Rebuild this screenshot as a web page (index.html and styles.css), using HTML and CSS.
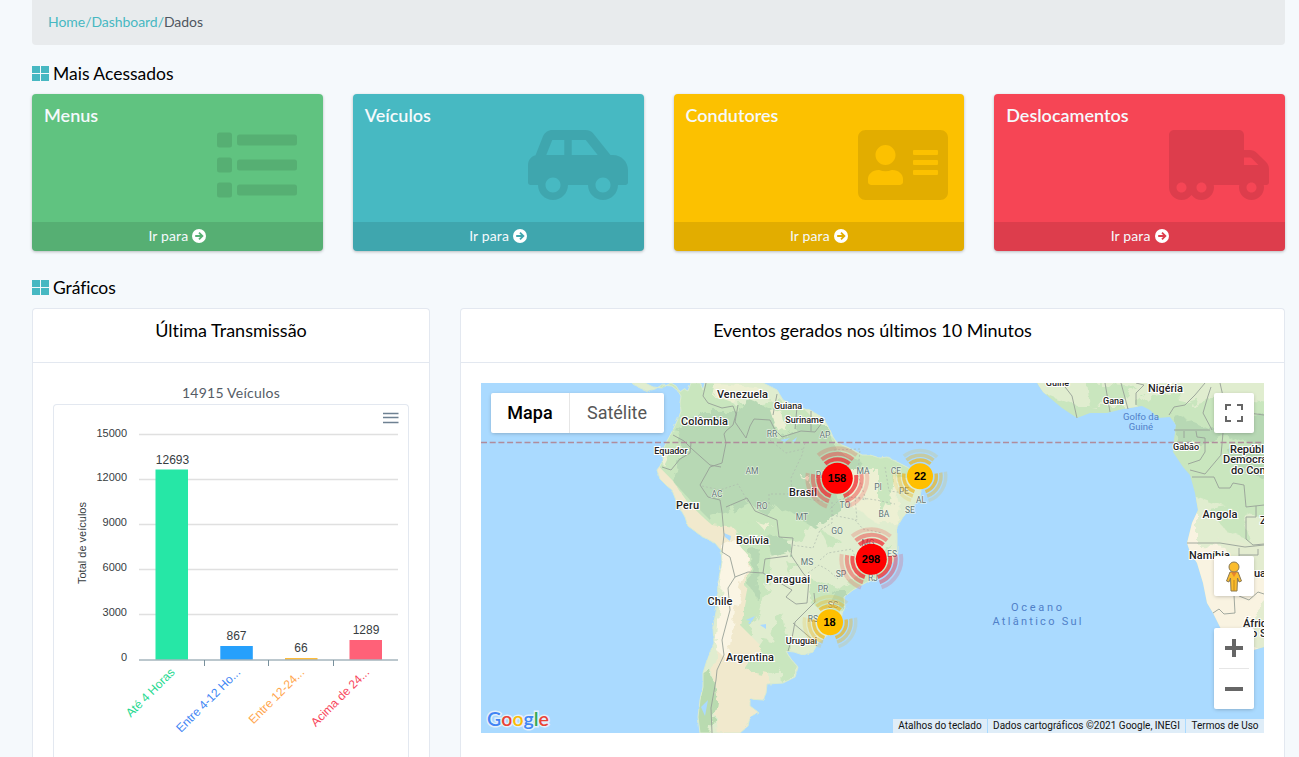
FILE: index.html
```html
<!DOCTYPE html>
<html lang="pt-BR">
<head>
<meta charset="utf-8">
<title>Dashboard</title>
<link rel="stylesheet" href="styles.css">
</head>
<body>
<svg class="defs" width="0" height="0">
  <defs>
    <symbol id="grid" viewBox="0 0 17 15"><path d="M0 0h8v7H0zM9 0h8v7H9zM0 8h8v7H0zM9 8h8v7H9z"/></symbol>
    <symbol id="go" viewBox="0 0 14 14"><circle cx="7" cy="7" r="7" fill="#fff"/><path class="go-arrow" d="M3.2 7h7M7 3.6 10.4 7 7 10.4"/></symbol>
  </defs>
</svg>
<main class="page">
  <nav class="breadcrumb"><a>Home</a><a>/</a><a>Dashboard</a><a>/</a><span>Dados</span></nav>

  <h2 class="section-title"><svg width="17" height="15"><use href="#grid"/></svg><span class="t-mais">Mais Acessados</span></h2>
  <section class="cards">
    <article class="card green">
      <div class="card-body"><h3 class="t-menus">Menus</h3>
        <svg class="card-icon list" width="80" height="80" viewBox="0 0 80 80"><rect x="0" y="7.5" width="15" height="15" rx="2.5"/><rect x="20" y="9.5" width="60" height="11" rx="2.5"/><rect x="0" y="32.5" width="15" height="15" rx="2.5"/><rect x="20" y="34.5" width="60" height="11" rx="2.5"/><rect x="0" y="57.5" width="15" height="15" rx="2.5"/><rect x="20" y="59.5" width="60" height="11" rx="2.5"/></svg></div>
      <a class="card-link"><span>Ir para</span><svg width="14" height="14"><use href="#go"/></svg></a>
    </article>
    <article class="card teal">
      <div class="card-body"><h3 class="t-veic">Veículos</h3>
        <svg class="card-icon" width="100" height="80" viewBox="0 0 640 512"><path d="M544 192h-16L419.22 56.02A64.025 64.025 0 0 0 369.24 32H155.33c-26.17 0-49.7 15.93-59.42 40.23L48 194.26C20.44 201.4 0 226.21 0 256v112c0 8.84 7.16 16 16 16h48c0 53.02 42.98 96 96 96s96-42.98 96-96h128c0 53.02 42.98 96 96 96s96-42.98 96-96h48c8.84 0 16-7.16 16-16v-80c0-53.02-42.98-96-96-96zM160 432c-26.47 0-48-21.53-48-48s21.53-48 48-48 48 21.53 48 48-21.53 48-48 48zm72-240H116.93l38.4-96H232v96zm48 0V96h89.24l76.8 96H280zm200 240c-26.47 0-48-21.53-48-48s21.53-48 48-48 48 21.53 48 48-21.53 48-48 48z"/></svg></div>
      <a class="card-link"><span>Ir para</span><svg width="14" height="14"><use href="#go"/></svg></a>
    </article>
    <article class="card yellow">
      <div class="card-body"><h3 class="t-cond">Condutores</h3>
        <svg class="card-icon" width="90" height="80" viewBox="0 0 576 512"><path d="M528 32H48C21.5 32 0 53.5 0 80v352c0 26.5 21.5 48 48 48h480c26.5 0 48-21.5 48-48V80c0-26.5-21.5-48-48-48zm-352 96c35.3 0 64 28.7 64 64s-28.7 64-64 64-64-28.7-64-64 28.7-64 64-64zm112 236.8c0 10.6-10 19.2-22.4 19.2H86.4C74 384 64 375.4 64 364.8v-19.2c0-31.8 30.1-57.6 67.2-57.6h5c12.3 5.1 25.7 8 39.8 8s27.6-2.9 39.8-8h5c37.1 0 67.2 25.8 67.2 57.6v19.2zM512 312c0 4.400-3.600 8-8 8H360c-4.400 0-8-3.600-8-8v-16c0-4.400 3.600-8 8-8h144c4.400 0 8 3.600 8 8v16zm0-64c0 4.400-3.600 8-8 8H360c-4.400 0-8-3.600-8-8v-16c0-4.400 3.600-8 8-8h144c4.400 0 8 3.600 8 8v16zm0-64c0 4.400-3.600 8-8 8H360c-4.400 0-8-3.600-8-8v-16c0-4.400 3.600-8 8-8h144c4.400 0 8 3.600 8 8v16z"/></svg></div>
      <a class="card-link"><span>Ir para</span><svg width="14" height="14"><use href="#go"/></svg></a>
    </article>
    <article class="card red">
      <div class="card-body"><h3 class="t-desl">Deslocamentos</h3>
        <svg class="card-icon" width="100" height="80" viewBox="0 0 640 512"><path d="M621.3 237.3l-58.500-58.500c-12-12-28.300-18.700-45.300-18.700H480V64c0-17.700-14.300-32-32-32H32C14.300 32 0 46.300 0 64v336c0 44.200 35.800 80 80 80 26.300 0 49.400-12.900 64-32.400 14.600 19.600 37.700 32.400 64 32.400 44.200 0 80-35.800 80-80 0-5.500-.6-10.800-1.600-16h163.200c-1.100 5.200-1.600 10.500-1.600 16 0 44.200 35.800 80 80 80s80-35.800 80-80c0-5.500-.6-10.800-1.600-16H624c8.800 0 16-7.200 16-16v-85.500c0-17-6.700-33.200-18.700-45.200zM80 432c-17.600 0-32-14.400-32-32s14.400-32 32-32 32 14.400 32 32-14.400 32-32 32zm128 0c-17.600 0-32-14.400-32-32s14.400-32 32-32 32 14.400 32 32-14.400 32-32 32zm272-224h37.500c4.300 0 8.300 1.700 11.300 4.700l43.300 43.300H480v-48zm48 224c-17.600 0-32-14.400-32-32s14.400-32 32-32 32 14.400 32 32-14.400 32-32 32z"/></svg></div>
      <a class="card-link"><span>Ir para</span><svg width="14" height="14"><use href="#go"/></svg></a>
    </article>
  </section>

  <h2 class="section-title second"><svg width="17" height="15"><use href="#grid"/></svg><span class="t-graf">Gráficos</span></h2>
  <section class="panels">
    <article class="panel">
      <header class="panel-head t-ult">Última Transmissão</header>
      <div class="panel-body">
        <p class="total">14915 Veículos</p>
        <div class="chart">
          <svg width="354" height="340" viewBox="54 405 354 340">
            <path d="M383 413.500h15.500M383 417.500h15.500M383 422.500h15.500" stroke="#6e8192" stroke-width="1.500"/>
            <path d="M139 434.500h259M139 479.500h259M139 524.500h259M139 569.500h259M139 614.500h259" stroke="#e0e0e0" stroke-width="1.300"/>
            <rect x="155.500" y="469.500" width="32.500" height="190" fill="#26e7a6"/>
            <rect x="220.300" y="646" width="32.500" height="13.500" fill="#26a0fc"/>
            <rect x="285" y="658" width="32.500" height="1.500" fill="#febc3b"/>
            <rect x="349.500" y="640" width="32.500" height="19.500" fill="#ff6178"/>
            <path d="M139 660h259M204.500 660v6M268.500 660v6M333.500 660v6" stroke="#78909c" fill="none"/>
            <g class="ylab"><text x="127" y="437">15000</text><text x="127" y="481">12000</text><text x="127" y="526">9000</text><text x="127" y="571">6000</text><text x="127" y="616">3000</text><text x="127" y="661">0</text></g>
            <g class="vals"><text x="172.500" y="464">12693</text><text x="236.500" y="640">867</text><text x="301" y="652">66</text><text x="366" y="634">1289</text></g>
            <text class="axis-title" transform="translate(86 543) rotate(-90)" textLength="82">Total de veículos</text>
            <g class="cats"><text transform="translate(175.500 673) rotate(-45)">Até 4 Horas</text><text transform="translate(241 673) rotate(-45)">Entre 4-12 Ho...</text><text transform="translate(305 673) rotate(-45)">Entre 12-24...</text><text transform="translate(370 673) rotate(-45)">Acima de 24...</text></g>
          </svg>
        </div>
      </div>
    </article>

    <article class="panel">
      <header class="panel-head t-evt">Eventos gerados nos últimos 10 Minutos</header>
      <div class="panel-body">
        <div class="map">
          <svg class="map-canvas" width="783" height="350" viewBox="481 383 783 350">
            <defs>
              <path id="sa" d="M632 383 638 387 647 391 655 389 662 385 672 386 678 391 681 396 680 403 681 411 679 417 673 430 667 441 663 450 663 460 660 466 657 470 660 479 666 485 672 490 677 503 685 517 688 526 703 537 715 543 721 550 722 562 718 583 717 607 713 627 714 643 708 657 703 673 703 687 700 700 698 717 700 733H740L748 726 750 717 758 712 750 706 750 699 763 700 766 693 767 684 783 683 795 677 798 667 790 658 786 651 794 652 803 655 813 652 818 643 828 635 840 620 845 607 844 597 853 590 867 582 878 578 888 570 893 562 897 550 897 527 903 517 913 507 920 497 922 483 915 472 907 467 893 460 887 457 880 458 870 455 862 455 857 452 847 447 837 443 833 437 830 430 823 418 810 410 797 407 783 400 777 390 763 383 705 383 703 390 700 383 691 383 688 391 684 389 680 392 676 386 671 383 662 388 653 387 645 383Z"/>
              <path id="af" d="M1037 383 1043 392 1050 398 1062 408 1077 418 1090 413 1107 413 1123 409 1142 406 1150 410 1158 418 1170 417 1176 425 1174 440 1173 452 1183 467 1190 475 1195 493 1198 510 1192 523 1187 543 1190 552 1197 563 1203 583 1207 603 1213 613 1220 627 1227 642 1237 648 1250 651 1264 647V383Z"/>
              <clipPath id="sac"><use href="#sa"/></clipPath>
              <clipPath id="afc"><use href="#af"/></clipPath>
              <filter id="rough" x="-5%" y="-5%" width="110%" height="110%"><feTurbulence type="fractalNoise" baseFrequency=".09" numOctaves="3" seed="4"/><feDisplacementMap in="SourceGraphic" scale="13"/></filter>
              <filter id="coast" x="-2%" y="-2%" width="104%" height="104%"><feTurbulence type="fractalNoise" baseFrequency=".18" numOctaves="2" seed="9"/><feDisplacementMap in="SourceGraphic" scale="3"/></filter>
              <g id="arcs" fill="none" stroke-dasharray="80 40" transform="rotate(-10)"><circle r="19" pathLength="360" opacity=".7"/><circle r="24.500" pathLength="360" opacity=".4"/><circle r="30" pathLength="360" opacity=".18"/></g>
            </defs>
            <rect x="481" y="383" width="783" height="350" fill="#aadaff"/>
            <use href="#sa" fill="#e0edcf"/>
            <g clip-path="url(#sac)"><g filter="url(#rough)">
              <path fill="#c9e6be" d="M660 375 710 380 735 405 775 400 800 405 835 440 905 460 915 480 865 470 840 510 810 520 800 540 770 545 765 590 745 650 735 600 738 560 700 525 660 480Z"/>
              <path fill="#b7d8b4" d="M678 430 705 412 738 412 748 398 770 407 778 440 800 425 828 425 838 452 860 460 862 470 835 483 842 510 815 528 790 512 776 507 770 518 748 502 728 512 708 518 690 500 672 480 682 452Z"/>
              <path fill="#f1e9cd" d="M655 462 672 480 690 505 712 525 735 528 738 545 748 555 748 585 740 625 770 655 770 740 716 740 713 670 725 620 722 550 680 525 650 485Z"/>
              <path fill="#faf5e4" d="M722 545 735 540 748 555 744 580 735 610 728 660 716 650 720 600Z"/>
              <path fill="#b9dbb0" d="M695 680 711 670 716 700 709 740H692Z"/>
              <path fill="#c9e6be" d="M749 555 772 545 768 580 758 620 750 605ZM770 630 782 612 790 650 799 672 782 686 780 660ZM808 578 840 588 858 575 870 560 892 545 888 575 845 600 842 615 812 605ZM740 525 770 518 784 545 755 552Z"/>
              <path fill="#b7d8b4" d="M765 535 788 540 791 552 772 557ZM750 550 760 548 757 600 751 588ZM835 590 845 590 845 610 828 604Z"/>
              <path fill="#edf0d3" d="M770 410 783 412 786 430 776 428ZM715 383 755 386 768 394 745 397 735 403 712 395ZM850 470 895 470 900 520 880 525 850 505ZM668 445 672 450 664 466 661 460ZM801 478 810 475 808 481ZM755 520 772 525 765 531Z"/>
              <path fill="#c9e6be" d="M880 463 895 462 890 500 880 520ZM820 530 840 540 830 550ZM785 560 800 565 790 575ZM745 670 765 640 790 645 786 665 770 675Z"/>
            </g>
            <g fill="#aadaff"><path d="M724 533 731 536 730 541 725 537ZM746 620 755 616 752 621ZM760 625 766 624 766 629ZM748 623 753 619 750 624ZM827 617 833 611 830 623ZM792 441 797 437 795 442ZM780 440 790 438 785 442ZM701 707 708 700 705 716Z"/></g>
            </g>
            <use href="#sa" fill="none" stroke="#d9ebd0" stroke-width="1" filter="url(#coast)"/>
            <path class="border" d="M706 383 703 396 708 403 722 408 733 406 736 414 733 425 726 431 724 434 726 443 722 463 M673 435 684 441 692 449 710 465 721 467 M691 443 690 453 680 459 671 470 662 467 M722 463 710 467 700 485 708 497 720 500 722 512 724 535 722 552 730 557 735 577 748 572 763 573 M726 507 747 498 755 511 777 520 779 537 793 538 791 555 803 573 809 580 807 603 796 604 786 597 792 590 763 573 765 559 788 556 M738 405 735 422 746 438 750 426 754 419 770 420 775 430 782 437 801 431 815 432 825 419 M777 394 773 415 M797 407 795 429 M811 411 811 431 M735 577 728 588 730 610 722 640 724 655 717 670 716 680 711 708 712 733 M814 593 815 602 795 622 792 638 788 651 M793 623 813 640 817 646"/>
            <path class="state" d="M702 486 720 490 738 484 748 502 M769 504 769 494 792 494 M770 440 786 453 803 449 M805 443 802 455 791 478 792 494 812 500 829 502 M834 450 860 449 858 475 866 500 850 497 839 500 829 510 M832 502 832 523 820 530 813 548 792 545 M832 515 857 520 855 497 876 500 895 504 M855 520 863 529 882 533 M820 560 828 553 852 549 858 565 M808 573 819 565 828 570 838 579 M885 467 889 491 905 493"/>
            <use href="#af" fill="#c9e6be"/>
            <g clip-path="url(#afc)"><g filter="url(#rough)">
              <path fill="#e0edcf" d="M1190 540V495L1235 510 1270 520V660H1180ZM1035 375H1270V402L1215 396 1190 404 1150 395 1135 407 1080 407 1040 392Z"/>
              <path fill="#b7d8b4" d="M1172 414 1210 430 1230 426 1270 412V450L1225 435 1206 443 1178 446ZM1228 450 1270 445V480L1238 470Z"/>
              <path fill="#c9e6be" d="M1087 382 1135 386 1120 402 1090 407ZM1148 396 1178 390 1180 414 1160 415ZM1210 510 1240 505 1250 540 1225 530Z"/>
              <path fill="#f9f3e1" d="M1184 515 1198 512 1198 545 1270 550V655H1220L1205 620 1185 555Z"/>
              <path fill="#e3ecd0" d="M1220 540 1270 545 1267 575 1235 565ZM1235 635 1268 600V655Z"/>
            </g></g>
            <path class="border" d="M1062 383 1072 396 1077 418M1105 383 1110 412M1121 383 1128 409M1136 383 1144 385 1136 393V405M1169 415 1174 407 1185 405 1195 395 1205 383 M1211 387 1208 396 1203 413 1212 430 M1174 430H1210M1184 431V438M1196 431 1197 437 1205 438 1205 452 1200 460 1188 464M1223 433 1221 455 1205 474 1190 470 M1192 477 1214 477 1219 488 1230 488 1233 483 1244 485 1246 507 1264 505M1256 506V517H1246V539L1253 545 1264 544 M1187 543 1220 543 1245 547 1264 545M1239 548V596L1249 600 1258 592 1264 594 M1239 555H1258V549M1213 613 1219 609 1224 614 1235 613 1234 595 M1233 411 1264 415 M1220 383 1225 405"/>
            <path d="M481 442.500H1264" stroke="#b08c9c" stroke-width="1.600" stroke-dasharray="6 2.700"/>
            <g class="st"><text x="772" y="437">RR</text><text x="825" y="438">AP</text><text x="752" y="474">AM</text><text x="821" y="478">PA</text><text x="863" y="474">MA</text><text x="896" y="474">CE</text><text x="878" y="490">PI</text><text x="904" y="494">PE</text><text x="921" y="503">AL</text><text x="910" y="513">SE</text><text x="884" y="517">BA</text><text x="845" y="508">TO</text><text x="717" y="497">AC</text><text x="762" y="509">RO</text><text x="802" y="520">MT</text><text x="837" y="534">GO</text><text x="868" y="546">MG</text><text x="892" y="557">ES</text><text x="807" y="565">MS</text><text x="841" y="577">SP</text><text x="873" y="581">RJ</text><text x="823" y="592">PR</text><text x="833" y="608">SC</text><text x="813" y="622">RS</text></g>
            <g class="ct"><text x="742.500" y="398" textLength="51">Venezuela</text><text x="704.500" y="425" textLength="47">Colômbia</text><text x="687.500" y="509" textLength="23">Peru</text><text x="803" y="496" textLength="28">Brasil</text><text x="752.500" y="544" textLength="33">Bolívia</text><text x="788" y="583" textLength="44">Paraguai</text><text x="720" y="605" textLength="25">Chile</text><text x="750" y="661" textLength="48">Argentina</text><text x="1165.500" y="392" textLength="35">Nigéria</text><text x="1220" y="518" textLength="35">Angola</text><text x="1209.500" y="559" textLength="41">Namíbia</text></g>
            <g class="ct edge"><text x="1230" y="453">Repúbl</text><text x="1223" y="463">Democra</text><text x="1231" y="474">do Con</text><text x="1260" y="524">Z</text><text x="1254" y="577">ua</text><text x="1243" y="627">Áfric</text><text x="1251" y="637">o S</text></g>
            <g class="ct small"><text x="788" y="409">Guiana</text><text x="804.500" y="423">Suriname</text><text x="671" y="454">Equador</text><text x="801.500" y="644">Uruguai</text><text x="1057.500" y="386">Guiné</text><text x="1113.500" y="404">Gana</text><text x="1186" y="450">Gabão</text></g>
            <g class="sea"><text x="1141" y="420">Golfo da</text><text x="1141" y="430">Guiné</text></g>
            <g class="ocean"><text x="1036.500" y="611" textLength="51">Oceano</text><text x="1037" y="625" textLength="89">Atlântico Sul</text></g>
            <g transform="translate(837.300 478.300)"><use href="#arcs" stroke="#f21b25" stroke-width="4"/><circle r="15.500" fill="red"/></g>
            <g transform="translate(871.300 559.300)"><use href="#arcs" stroke="#f21b25" stroke-width="4"/><circle r="15.500" fill="red"/></g>
            <g transform="translate(920 476.300)"><use href="#arcs" stroke="#edb51b" stroke-width="4" transform="scale(.86)"/><circle r="13" fill="#ffbf00"/></g>
            <g transform="translate(830 622.300)"><use href="#arcs" stroke="#edb51b" stroke-width="4" transform="scale(.86)"/><circle r="13" fill="#ffbf00"/></g>
            <g class="cl"><text x="837" y="482">158</text><text x="871" y="563">298</text><text x="920" y="480">22</text><text x="829.500" y="626">18</text></g>
            <text class="glogo" x="487" y="725.500" textLength="62" lengthAdjust="spacingAndGlyphs"><tspan fill="#4285f4">G</tspan><tspan fill="#ea4335">o</tspan><tspan fill="#fbbc05">o</tspan><tspan fill="#4285f4">g</tspan><tspan fill="#34a853">l</tspan><tspan fill="#ea4335">e</tspan></text>
          </svg>
          <div class="map-type"><b>Mapa</b><span>Satélite</span></div>
          <div class="ctl full"><svg width="18" height="18" viewBox="0 0 18 18" fill="none" stroke="#666" stroke-width="2"><path d="M1 6V1h5M12 1h5v5M17 12v5h-5M6 17H1v-5"/></svg></div>
          <div class="ctl peg"><svg width="18" height="31" viewBox="0 0 18 31"><path d="M5 11h8l3.500 9-2.500 1-1.500-4-.5 13H6l-.5-13L4 21l-2.500-1Z" fill="#fbbc2c" stroke="#8a7a55"/><path d="M9 19v11" stroke="#c08a20"/><path d="M6 11h6l-3 5z" fill="#e8842c"/><circle cx="9" cy="6" r="5" fill="#fbbc2c" stroke="#8a7a55"/></svg></div>
          <div class="zoomer"><i><svg width="18" height="18"><path d="M0 9h18M9 0v18" stroke="#666" stroke-width="4"/></svg></i><i><svg width="18" height="18"><path d="M0 9h18" stroke="#666" stroke-width="4"/></svg></i></div>
          <div class="attrib"><span class="a1">Atalhos do teclado</span><span class="a2">Dados cartográficos ©2021 Google, INEGI</span><span class="a3">Termos de Uso</span></div>
        </div>
      </div>
    </article>
  </section>
</main>
</body>
</html>
```
FILE: styles.css
```css
* { box-sizing: border-box; }
body { margin: 0; background: #f5f9fc; font-family: Lato, "Open Sans", sans-serif; font-size: 14px; font-variant-ligatures: none; }
.defs { position: absolute; }
.page { padding: 0 14px 0 32px; height: 757px; overflow: hidden; }
h2, h3, p { margin: 0; font-weight: 400; }
.breadcrumb { height: 45px; background: #e8ebed; border-radius: 0 0 4px 4px; padding: 0 16px; line-height: 44px; color: #4f5660; display: flex; letter-spacing: -.05px; }
.breadcrumb a { color: #47b8c2; }
.section-title { display: flex; align-items: center; height: 22px; margin: 18px 0 9px; font-size: 17.500px; gap: 4px; color: #000; line-height: 22px; }
.section-title svg { fill: #47b8c2; margin-top: -1px; }
.section-title.second { margin: 26px 0 9px; }
.t-mais { letter-spacing: 0; }
.t-graf { letter-spacing: -.1px; }
.cards { display: grid; grid-template-columns: repeat(4, 1fr); gap: 30px; }
.card { height: 157px; border-radius: 4px; overflow: hidden; display: flex; flex-direction: column; box-shadow: 0 1px 3px rgba(0,0,0,.25); color: #f5f9fc; }
.card-body { flex: 1; padding: 11px 16px 0 12px; }
.card h3 { font-size: 18px; line-height: 21px; font-weight: 600; height: 20px; }
.card-icon { display: block; margin-left: auto; fill: rgba(0,0,0,.1); }
.card-icon.list { margin-right: 10px; }
.card-link { height: 29px; padding-bottom: 1px; background: rgba(0,0,0,.1); display: flex; align-items: center; justify-content: center; gap: 4px; letter-spacing: .14px; line-height: 28px; }
.go-arrow { fill: none; stroke: var(--dark); stroke-width: 1.800; }
.green { background: #60c380; --dark: #56af73; }
.teal { background: #47b9c2; --dark: #40a6ae; }
.yellow { background: #fcc100; --dark: #e2ad00; }
.red { background: #f64555; --dark: #dd3e4c; }
.panels { display: grid; grid-template-columns: 398px 1fr; gap: 30px; }
.panel { background: #fff; border: 1px solid #e3e8f0; border-bottom: 0; border-radius: 4px 4px 0 0; height: 449px; }
.panel-head { height: 54px; border-bottom: 1px solid #e3e8f0; text-align: center; font-size: 18px; line-height: 43px; color: #000; }
.t-evt { letter-spacing: -.04px; }
.panel-body { padding: 20px 20px 0; }
.total { height: 21px; line-height: 19px; text-align: center; color: #555c66; letter-spacing: .25px; }
.chart { border: 1px solid #e3e8f0; border-bottom: 0; border-radius: 4px 4px 0 0; height: 353px; }
.chart svg { display: block; }
.chart text { font-family: "Liberation Sans", Arial, sans-serif; fill: #373d3f; font-size: 11px; }
.chart .ylab text, .chart .cats text { text-anchor: end; }
.chart .vals text { font-size: 12px; text-anchor: middle; }
.chart .axis-title { text-anchor: middle; }
.chart .cats text { font-size: 12px; }
.chart .cats text:nth-child(1) { fill: #26d990; }
.chart .cats text:nth-child(2) { fill: #3f86f4; }
.chart .cats text:nth-child(3) { fill: #ffa64d; }
.chart .cats text:nth-child(4) { fill: #f8485e; }
.map { position: relative; height: 350px; width: 783px; font-family: Roboto, sans-serif; }
.map-canvas { display: block; }
.map text { text-anchor: middle; font-family: Roboto, sans-serif; }
.border { fill: none; stroke: #97a097; stroke-width: .9; }
.state { fill: none; stroke: #adbaad; stroke-width: .7; stroke-dasharray: 2 2; }
.st text { font-size: 8.500px; fill: #5f7474; paint-order: stroke; stroke: #eef5e8; stroke-width: 1.200px; }
.ct text { font-size: 11px; font-weight: 500; fill: #222; paint-order: stroke; stroke: #fff; stroke-width: 2.200px; }
.map .edge text { text-anchor: start; }
.ct.small text { font-size: 9px; }
.sea text { font-size: 9.500px; fill: #5080c8; }
.ocean text { font-size: 11px; fill: #5080c8; }
.cl text { font-family: "Liberation Sans", Arial, sans-serif; font-size: 11px; font-weight: 700; }
.map .glogo { text-anchor: start; font-family: Lato, sans-serif; font-weight: 600; font-size: 20px; paint-order: stroke; stroke: #e3f0fb; stroke-width: 3px; }
.map-type { position: absolute; left: 10px; top: 10px; height: 40px; width: 173px; background: #fff; border-radius: 2px; box-shadow: 0 1px 4px -1px rgba(0,0,0,.3); display: flex; font-size: 18px; line-height: 40px; color: #565656; text-align: center; }
.map-type b { width: 79px; color: #000; font-weight: 500; border-right: 1px solid #e6e6e6; }
.map-type span { flex: 1; }
.ctl, .zoomer { position: absolute; right: 10px; width: 40px; height: 40px; background: #fff; border-radius: 2px; box-shadow: 0 1px 4px -1px rgba(0,0,0,.3); display: flex; align-items: center; justify-content: center; }
.full { top: 10px; }
.peg { top: 173px; }
.zoomer { top: 245px; height: 81px; flex-direction: column; }
.zoomer i { width: 30px; height: 40px; display: flex; align-items: center; justify-content: center; }
.zoomer i + i { border-top: 1px solid #e6e6e6; height: 41px; }
.attrib { position: absolute; right: 0; bottom: 0; height: 14px; display: flex; gap: 1px; font-size: 10px; line-height: 14px; color: #111; }
.attrib span { background: rgba(245,245,245,.7); text-align: center; white-space: nowrap; }
.a1 { width: 94px; } .a2 { width: 197px; } .a3 { width: 78px; }
```
